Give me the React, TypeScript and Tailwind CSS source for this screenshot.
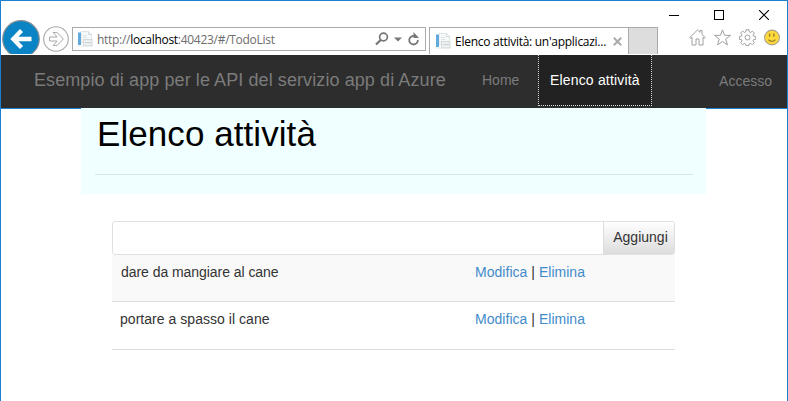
import React from "react";

function BackIcon() {
  return (
    <svg width="39" height="34" viewBox="0 0 39 34" className="block shrink-0">
      <circle cx="19" cy="19" r="18.3" fill="#0a84c4" stroke="#8a8f93" strokeWidth="1.2" />
      <path d="M29.500 19H12M19.500 10.500 11.300 19l8.200 8.500" fill="none" stroke="#fff" strokeWidth="4.300" />
    </svg>
  );
}

function ForwardIcon() {
  return (
    <svg width="26" height="26" viewBox="0 0 26 26" className="ml-[2px] mt-[6px] block shrink-0">
      <circle cx="13" cy="13" r="12.3" fill="#fdfdfd" stroke="#aaa" strokeWidth="1.1" />
      <path d="M6.500 11h7.600l-3.900-4.500h3.900l6.200 6.500-6.200 6.500h-3.900l3.900-4.500H6.500z" fill="#fff" stroke="#aaa" strokeWidth="1" />
    </svg>
  );
}

function PageIcon() {
  return (
    <svg width="16" height="16" viewBox="0 0 16 16" className="block shrink-0">
      <path d="M4 .5h7.500l3 3v8H4z" fill="#f6f9f9" stroke="#e0e5e7" />
      <path d="M11.500.5v3h3" fill="none" stroke="#d3d9dc" />
      <path d="M6 4.500h4M6 6.500h4" stroke="#dfe4e6" />
      <rect x="1" y="1.500" width="3" height="12.500" fill="#62aadb" />
      <path d="M.5 15h5" stroke="#e6e8e9" />
      <rect x="6.500" y="8.500" width="8.500" height="6.500" fill="#edf0f0" stroke="#d4d8da" />
      <path d="M8 11.500h6" stroke="#cbd1d4" />
    </svg>
  );
}

function AddressBar() {
  return (
    <div className="ml-[3px] mt-[7px] flex h-[24px] w-[354px] shrink-0 items-center border border-[#aaa] bg-white pl-[4px]">
      <PageIcon />
      <span className="ml-[4px] mt-[2px] w-[270px] whitespace-nowrap font-['Open_Sans',sans-serif] text-[12px] leading-[22px] tracking-[-0.29px] text-[#6d6d6d]">
        http://<span className="text-black">localhost</span>:40423/#/TodoList
      </span>
      <svg width="46" height="14" viewBox="0 0 46 14" className="ml-[8px] block shrink-0">
        <circle cx="8.500" cy="5" r="3.900" fill="none" stroke="#777" strokeWidth="1.700" />
        <path d="M5.700 8 1 12.500" stroke="#777" strokeWidth="2.300" />
        <path d="M19 5.500h8L23 9.500z" fill="#777" />
        <path d="M42.800 7.800A4.300 4.300 0 1 1 39.500 4" fill="none" stroke="#777" strokeWidth="1.800" />
        <path d="M38.500 0v6h5.500z" fill="#777" />
      </svg>
    </div>
  );
}

function BrowserTab() {
  return (
    <div className="ml-[3px] mt-[7px] flex h-[27px] shrink-0">
      <div className="flex w-[200px] border-l border-t border-r border-[#aaa] bg-white pl-[5px] pt-[5px]">
        <PageIcon />
        <span className="ml-[4px] w-[154px] whitespace-nowrap font-['Open_Sans',sans-serif] text-[12px] leading-[17px] tracking-[-0.27px] text-black">
          Elenco attività: un'applicazi...
        </span>
        <svg width="9" height="9" viewBox="0 0 9 9" className="ml-[4px] mt-[4px] block shrink-0">
          <path d="m.8.8 7.400 7.400M8.200.8.800 8.200" stroke="#aaa" strokeWidth="2" />
        </svg>
      </div>
      <div className="w-[29px] border-r border-t border-[#aaa] bg-[#ddd]" />
    </div>
  );
}

function ToolIcons() {
  return (
    <div className="ml-auto mr-[7px] mt-[9px] flex shrink-0 gap-[8px]">
      <svg width="17" height="17" viewBox="0 0 17 17" fill="none" stroke="#a0a0a0" className="block">
        <path d="M.8 8.500 8.500.9l2.500 2.400V1.500h2v3.800l3.300 3.200-1 1-1.300-1.200v7.700H10V10H7v6H3V8.300L1.800 9.500z" />
      </svg>
      <svg width="17" height="17" viewBox="0 0 17 17" fill="none" stroke="#a0a0a0" className="block">
        <path d="m8.500.8 2 5.500 6 .1-4.800 3.700 1.800 5.800-5-3.400-5 3.400 1.800-5.800L.5 6.400l6-.1z" />
      </svg>
      <svg width="17" height="17" viewBox="0 0 17 17" fill="none" stroke="#a0a0a0" className="block">
        <path d="M7.100.7h2.800l.4 2.300 1.200.5 1.900-1.400 2 2L14 6l.5 1.100 2.200.4v2.800l-2.200.4-.5 1.200 1.400 1.800-2 2-1.900-1.300-1.200.5-.4 1.700H7.100l-.4-1.700-1.200-.5-1.900 1.300-2-2L3 11.900l-.5-1.200-2.100-.4V7.500l2.100-.4L3 6 1.600 4.100l2-2 1.900 1.400L6.700 3z" />
        <circle cx="8.500" cy="8.500" r="2.500" />
      </svg>
      <svg width="16" height="17" viewBox="0 0 16 17" className="block">
        <circle cx="8" cy="8.500" r="7.400" fill="#ffd83b" stroke="#a9a38d" strokeWidth="1.100" />
        <path d="M5.600 4.500v3.200M9.900 4.500v3.200" stroke="#9c8430" strokeWidth="1.500" />
        <path d="M4.300 10.700c1.700 2.300 5.400 2.300 7.200 0" fill="none" stroke="#9c8430" strokeWidth="1.200" />
      </svg>
    </div>
  );
}

function WindowButtons() {
  return (
    <div className="flex h-[19px] items-end justify-end gap-[35px] pr-[18px]">
      <svg width="10" height="10" viewBox="0 0 10 10" className="block" shapeRendering="crispEdges">
        <path d="M0 5.500h10" stroke="#000" />
      </svg>
      <svg width="10" height="10" viewBox="0 0 10 10" className="block" shapeRendering="crispEdges">
        <rect x=".5" y=".5" width="9" height="9" fill="none" stroke="#000" />
      </svg>
      <svg width="10" height="10" viewBox="0 0 10 10" className="block">
        <path d="m0 0 10 10M10 0 0 10" stroke="#000" strokeWidth="1.100" />
      </svg>
    </div>
  );
}

function NavBar() {
  return (
    <nav className="flex h-[53px] bg-[#2d2d2d] leading-[50px] text-[#7b7b7b]">
      <span className="ml-[33px] w-[438px] whitespace-nowrap text-[18px] tracking-[0.09px]">
        Esempio di app per le API del servizio app di Azure
      </span>
      <span className="ml-[10px] w-[56px] text-[14px]">Home</span>
      <span className="h-[51px] w-[114px] whitespace-nowrap border-x border-b border-dotted border-[#ddd] bg-[#222] pl-[11px] text-[14px] tracking-[0.17px] text-white">
        Elenco attività
      </span>
      <span className="ml-auto mr-[15px] text-[14px] leading-[52px]">Accesso</span>
    </nav>
  );
}

const todos = [
  {
    text: "dare da mangiare al cane",
    row: "h-[47px] bg-[#f9f9f9] pl-[9px] leading-[34px]",
    cell: "w-[354px] tracking-[-0.05px]",
  },
  {
    text: "portare a spasso il cane",
    row: "h-[48px] pl-[8px] leading-[34px]",
    cell: "w-[355px] tracking-[0.04px]",
  },
];

export default function App() {
  return (
    <div className="flex h-[401px] w-[788px] flex-col overflow-hidden border-x border-t border-[#1a80d2] bg-white font-['Liberation_Sans',Arial,sans-serif]">
      <header className="h-[54px] shrink-0">
        <WindowButtons />
        <div className="flex h-[35px] items-start pl-[1px]">
          <BackIcon />
          <ForwardIcon />
          <AddressBar />
          <BrowserTab />
          <ToolIcons />
        </div>
      </header>
      <NavBar />
      <div className="flex h-[86px] shrink-0">
        <div className="h-px w-[80px] bg-[#1a80d2]" />
        <div className="h-[86px] w-[625px] bg-[#f0ffff] pl-[14px] pr-[13px]">
          <h1 className="h-[67px] border-b border-[#d8e4e4] pl-[2px] pt-[6px] text-[35px] leading-[40px] tracking-[0.07px] text-black">
            Elenco attività
          </h1>
        </div>
        <div className="h-px flex-1 bg-[#1a80d2]" />
      </div>
      <main className="ml-[111px] mt-[27px] w-[563px] text-[14px] text-[#333]">
        <div className="flex h-[34px] rounded-[3px] border border-[#e0e0e0]">
          <input aria-label="Elenco attività" className="h-full min-w-0 flex-1 outline-none" />
          <button className="flex h-full w-[71px] justify-center whitespace-nowrap rounded-r-[2px] border-l border-[#ddd] bg-linear-to-b from-white to-[#dcdcdc] pl-[3px] text-[14px] leading-[30px]">
            Aggiungi
          </button>
        </div>
        {todos.map((todo) => (
          <div key={todo.text} className={`flex border-b border-[#ddd] ${todo.row}`}>
            <span className={todo.cell}>{todo.text}</span>
            <span className="whitespace-nowrap tracking-[0.03px]">
              <a className="text-[#428bca]">Modifica</a> | <a className="text-[#428bca]">Elimina</a>
            </span>
          </div>
        ))}
      </main>
    </div>
  );
}
